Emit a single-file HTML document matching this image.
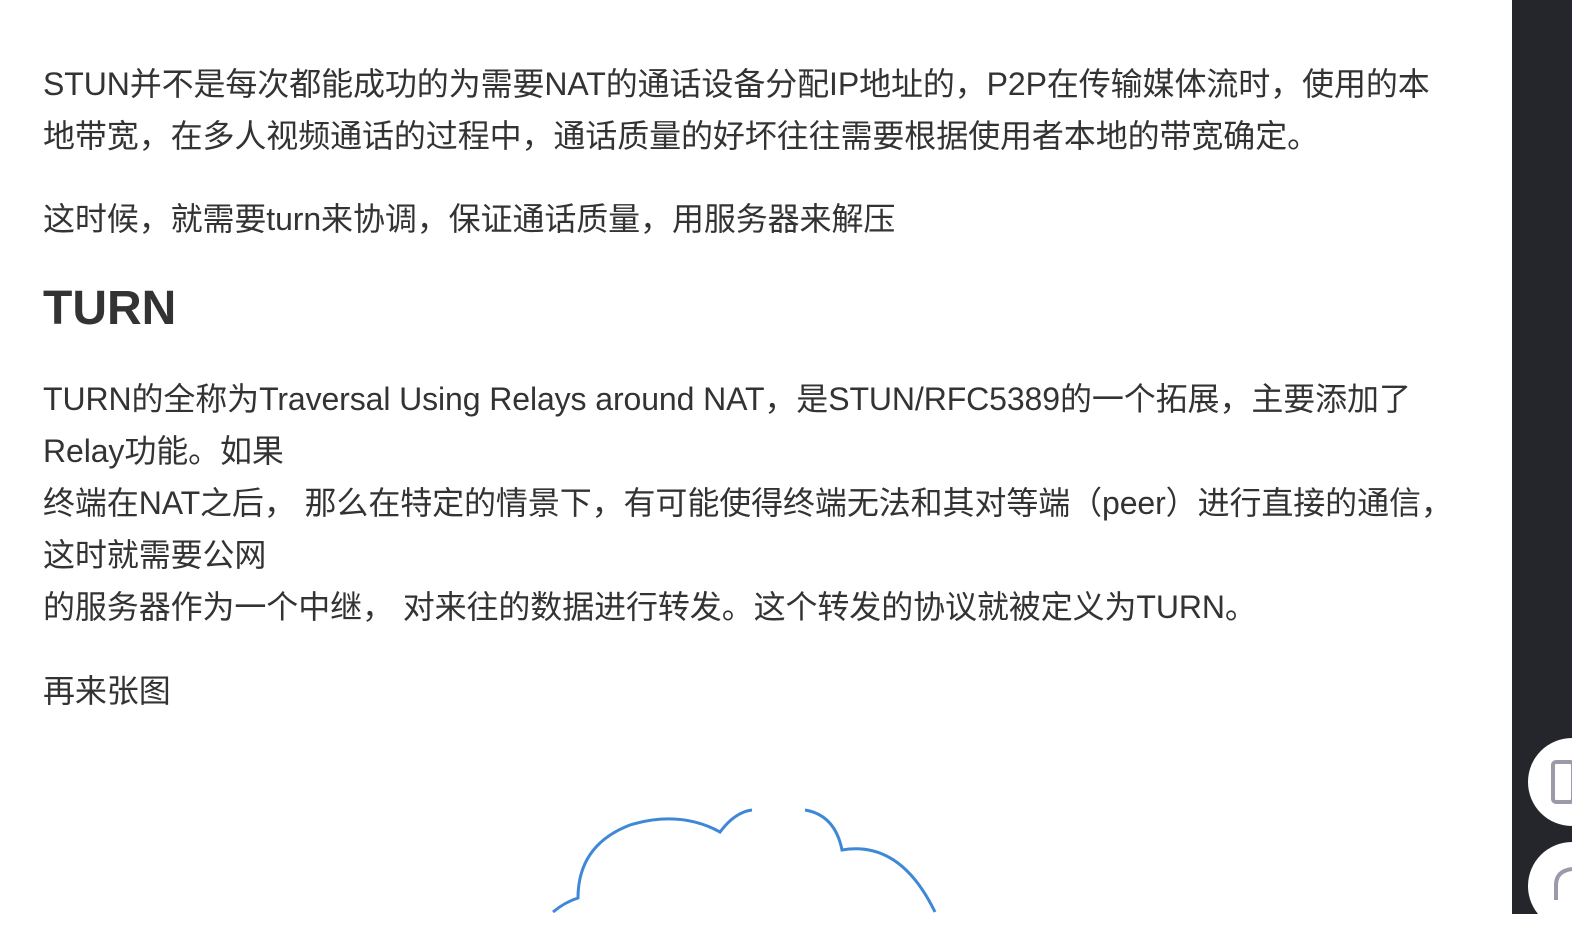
<!DOCTYPE html>
<html><head><meta charset="utf-8"><style>
body{margin:0;width:1572px;height:914px;overflow:hidden;background:#fff;position:relative;font-family:"Liberation Sans","Noto Sans CJK SC",sans-serif;color:#333;}
.t{position:absolute;left:43px;font-size:32px;line-height:52px;white-space:nowrap;letter-spacing:-0.1px}
h1{position:absolute;left:43px;top:281px;margin:0;font-size:48px;font-weight:bold;line-height:56px}
.side{position:absolute;left:1512px;top:0;width:60px;height:914px;background:#25262b}
.c{position:absolute;width:88px;height:88px;border-radius:50%;background:#fff;left:1528px}
</style></head><body>
<div class="t" style="top:58px">STUN并不是每次都能成功的为需要NAT的通话设备分配IP地址的，P2P在传输媒体流时，使用的本<br>地带宽，在多人视频通话的过程中，通话质量的好坏往往需要根据使用者本地的带宽确定。</div>
<div class="t" style="top:193px">这时候，就需要turn来协调，保证通话质量，用服务器来解压</div>
<h1>TURN</h1>
<div class="t" style="top:373px">TURN的全称为Traversal Using Relays around NAT，是STUN/RFC5389的一个拓展，主要添加了<br>Relay功能。如果<br>终端在NAT之后， 那么在特定的情景下，有可能使得终端无法和其对等端（peer）进行直接的通信，<br>这时就需要公网<br>的服务器作为一个中继， 对来往的数据进行转发。这个转发的协议就被定义为TURN。</div>
<div class="t" style="top:665px">再来张图</div>
<svg style="position:absolute;left:0;top:0" width="1572" height="914">
<path d="M553 912 Q565 902 578 898 Q578 845 630 825 Q680 810 720 832 Q735 812 752 810 M805 810 Q835 815 842 850 Q900 840 935 912" fill="none" stroke="#3e88d6" stroke-width="3"/>
</svg>
<div class="side"></div>
<div class="c" style="top:738px"></div>
<div class="c" style="top:842px"></div>
<svg style="position:absolute;left:0;top:0" width="1572" height="914">
<rect x="1553" y="762" width="20" height="40" rx="3" fill="none" stroke="#9a9aa8" stroke-width="4"/>
<path d="M1556 900 v-15 q0-14 16-16" fill="none" stroke="#9a9aa8" stroke-width="4"/>
</svg>
</body></html>
